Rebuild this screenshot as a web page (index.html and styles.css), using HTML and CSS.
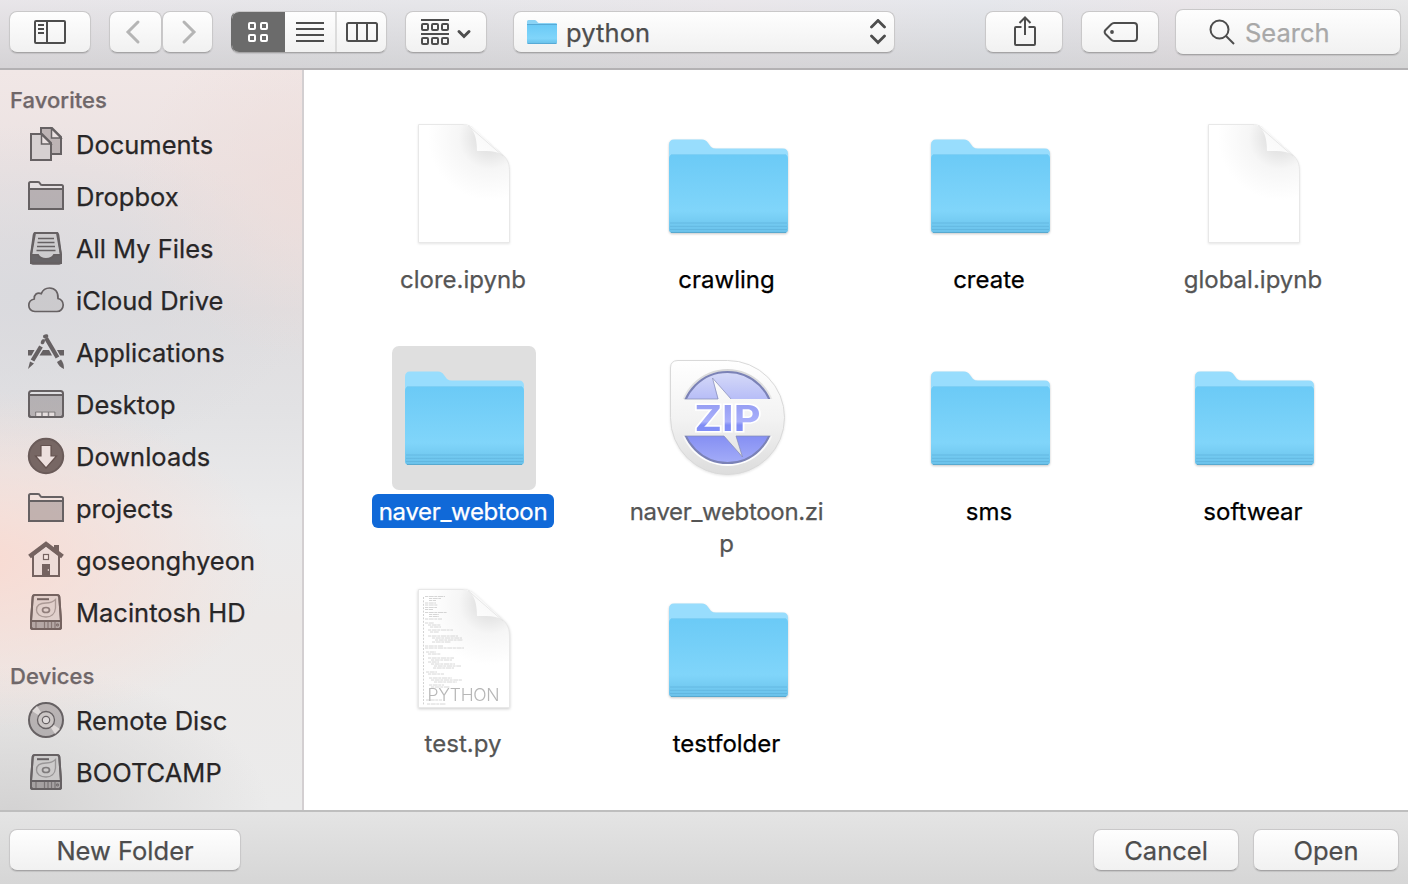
FILE: index.html
```html
<!DOCTYPE html>
<html lang="en">
<head>
<meta charset="utf-8">
<title>Open</title>
<link rel="stylesheet" href="styles.css">
</head>
<body>
<svg class="defs" width="0" height="0" aria-hidden="true">
  <defs>
    <linearGradient id="folderFront" x1="0" y1="0" x2="0" y2="1">
      <stop offset="0" stop-color="#6bcaf6"/><stop offset=".72" stop-color="#80d5fa"/><stop offset=".86" stop-color="#74cbf2"/><stop offset="1" stop-color="#6ac1ea"/>
    </linearGradient>
    <linearGradient id="curl" x1="0" y1="1" x2=".6" y2=".4">
      <stop offset="0" stop-color="#fff"/><stop offset="1" stop-color="#f9f9f9"/>
    </linearGradient>
    <radialGradient id="pageShade" gradientUnits="userSpaceOnUse" cx="98" cy="24" r="62">
      <stop offset="0" stop-color="#dcdcdc"/><stop offset=".25" stop-color="#e6e6e6"/><stop offset=".5" stop-color="#f6f6f6"/><stop offset="1" stop-color="#fff"/>
    </radialGradient>
    <linearGradient id="zipPlate" gradientUnits="userSpaceOnUse" x1="0" y1="14" x2="0" y2="129">
      <stop offset="0" stop-color="#fff"/><stop offset=".5" stop-color="#f3f3f3"/><stop offset="1" stop-color="#dcdcdc"/>
    </linearGradient>
    <linearGradient id="zipRing" x1="0" y1="0" x2="0" y2="1">
      <stop offset="0" stop-color="#d8d8d8"/><stop offset=".5" stop-color="#f0f0f0"/><stop offset="1" stop-color="#fff"/>
    </linearGradient>
    <linearGradient id="zipBlue" x1="0" y1="0" x2="0" y2="1">
      <stop offset="0" stop-color="#d6daf8"/><stop offset=".28" stop-color="#b9bff7"/><stop offset=".7" stop-color="#858ff3"/><stop offset="1" stop-color="#a3acf8"/>
    </linearGradient>
    <linearGradient id="zipText" x1="0" y1="0" x2="0" y2="1">
      <stop offset="0" stop-color="#8e96f0"/><stop offset=".6" stop-color="#a9b0fb"/><stop offset=".68" stop-color="#7f8cf5"/><stop offset="1" stop-color="#8794fa"/>
    </linearGradient>
    <symbol id="folder" viewBox="0 0 144 144">
      <path d="M13 31Q13 25.500 18 25.500H46Q50 25.500 52 29L55 33Q57 34.500 60 34.500H127Q132 34.500 132 40V114Q132 119 128 119H17Q13 119 13 114Z" fill="#98ddfd"/>
      <path d="M13 45Q13 40 18 40H127Q132 40 132 45V115Q132 119 128 119H17Q13 119 13 115Z" fill="url(#folderFront)"/>
      <path d="M14 109H131M14 112.300H131M14 115.500H131" stroke="#5fb3dc" stroke-width="1" opacity=".75"/>
      <path d="M15 118.500H130" stroke="#58a9cf" stroke-width="1.200"/>
      <path d="M15 40.500H130" stroke="#7dcff5" stroke-width="1"/>
    </symbol>
    <symbol id="page" viewBox="0 0 144 144">
      <path d="M26.500 10.500H70C78 10.500 81 14 85 18L111 41C116 46 117.500 50 117.500 58V128.500H26.500Z" fill="url(#pageShade)" stroke="#e8e8e8"/>
      <path d="M71 10.700C80 11 85 20 85 37C101 36.500 109 38 113 43L85 17C80 12.500 77 10.700 71 10.700Z" fill="url(#curl)"/>
      <path d="M76 11.500L111 42" stroke="#e2e2e2" fill="none" stroke-width=".8"/>
    </symbol>
    <symbol id="s-folder" viewBox="0 0 40 40">
      <path d="M3 12H37V32H3Z" class="tint"/>
      <path d="M3 31V6.500Q3 5 4.500 5H12Q13.500 5 14 6.500T16 8H35.500Q37 8 37 9.500V31Q37 32 36 32H4Q3 32 3 31ZM3 12H37"/>
    </symbol>
    <symbol id="s-drive" viewBox="0 0 40 40">
      <path d="M9 2H31Q33 2 33.300 4L35 28V34Q35 36 33 36H7Q5 36 5 34V28L6.700 4Q7 2 9 2Z" class="tint-light"/>
      <path d="M5 28H35V34Q35 36 33 36H7Q5 36 5 34Z" class="tint"/>
      <path d="M11 6.200H23"/>
      <path d="M29.500 6.500V15C29 21 25 24 20 24C14 24 10.500 21 10.500 17C10.500 12.500 14 10 20 10C25 10 27 9 29.500 6.500Z" stroke-width="1.300" opacity=".5"/>
      <ellipse cx="20" cy="17" rx="3.500" ry="2.500" stroke-width="1.700" opacity=".75"/>
      <path d="M5 28H35" stroke-width="1.500"/>
      <path d="M10 28V35M18.500 29V35M22 29V35M25.500 29V35M29 29V35" stroke-width="1.200" opacity=".7"/>
      <circle cx="31.500" cy="32" r=".4"/>
      <path d="M9 2H31Q33 2 33.300 4L35 28V34Q35 36 33 36H7Q5 36 5 34V28L6.700 4Q7 2 9 2Z"/>
    </symbol>
  </defs>
</svg>

<div class="dialog">
  <header class="toolbar">
    <button class="btn btn-sidebar" aria-label="Sidebar">
      <svg width="34" height="26" viewBox="0 0 34 26" class="glyph"><rect x="2" y="2" width="30" height="22" rx="1"/><path d="M14 2V24M5 6H11M5 10H11M5 14H11"/></svg>
    </button>
    <div class="nav">
      <button class="btn btn-back" aria-label="Back"><svg width="16" height="26" viewBox="0 0 16 26" class="chev"><path d="M13 3L3 13L13 23"/></svg></button>
      <button class="btn btn-fwd" aria-label="Forward"><svg width="16" height="26" viewBox="0 0 16 26" class="chev"><path d="M3 3L13 13L3 23"/></svg></button>
    </div>
    <div class="btn segments">
      <span class="seg seg-on"><svg width="22" height="22" viewBox="0 0 22 22" class="glyph white"><rect x="2" y="2" width="6" height="6" rx="1"/><rect x="14" y="2" width="6" height="6" rx="1"/><rect x="2" y="14" width="6" height="6" rx="1"/><rect x="14" y="14" width="6" height="6" rx="1"/></svg></span>
      <span class="seg seg-mid"><svg width="28" height="22" viewBox="0 0 28 22" class="glyph"><path d="M0 2H28M0 8H28M0 14H28M0 20H28"/></svg></span>
      <span class="seg seg-end"><svg width="32" height="22" viewBox="0 0 32 22" class="glyph"><rect x="1" y="2" width="30" height="18" rx="1.500"/><path d="M11 2V20M21 2V20"/></svg></span>
    </div>
    <button class="btn btn-group" aria-label="Arrange">
      <svg width="52" height="28" viewBox="0 0 52 28" class="glyph"><path d="M1 2H29M1 16H29"/><rect x="2" y="6" width="6" height="6" rx="1"/><rect x="12" y="6" width="6" height="6" rx="1"/><rect x="22" y="6" width="6" height="6" rx="1"/><rect x="2" y="20" width="6" height="6" rx="1"/><rect x="12" y="20" width="6" height="6" rx="1"/><rect x="22" y="20" width="6" height="6" rx="1"/><path d="M39 13.500L44 18.500L49 13.500" stroke-width="3" stroke-linecap="round"/></svg>
    </button>
    <div class="btn path">
      <svg class="path-folder" width="32" height="26" viewBox="0 0 32 26"><path d="M1 2.500Q1 1 2.500 1H9Q10 1 11 2.500T13 4H29.500Q31 4 31 5V23Q31 24.500 29.500 24.500H2.500Q1 24.500 1 23Z" fill="#8bd3f5"/><path d="M1 6H31V23Q31 24.500 29.500 24.500H2.500Q1 24.500 1 23Z" fill="url(#folderFront)"/><path d="M1 5.500H31M1.500 24.500H30.500" stroke="#57aad6" fill="none"/></svg>
      <span class="path-name">python</span>
      <svg width="18" height="26" viewBox="0 0 18 26" class="glyph updown"><path d="M2.500 8L9 1.500L15.500 8M2.500 17L9 23.500L15.500 17" stroke-linecap="round"/></svg>
    </div>
    <button class="btn btn-share" aria-label="Share">
      <svg width="24" height="32" viewBox="0 0 24 32" class="glyph"><path d="M8.500 12H3Q2 12 2 13V29Q2 30 3 30H21Q22 30 22 29V13Q22 12 21 12H15.500M12 20V3M6.500 8L12 2.500L17.500 8"/></svg>
    </button>
    <button class="btn btn-tag" aria-label="Tags">
      <svg width="36" height="22" viewBox="0 0 36 22" class="glyph"><path d="M11 2H31Q34 2 34 5V17Q34 20 31 20H11Q9.500 20 8 18.500L2.500 13Q.8 11 2.500 9L8 3.500Q9.500 2 11 2Z"/><circle cx="9" cy="11" r="1.900" fill="#4d4d4d" stroke="none"/></svg>
    </button>
    <div class="btn search">
      <svg width="26" height="26" viewBox="0 0 26 26" class="glyph"><circle cx="10.500" cy="10.500" r="9"/><path d="M17 17L25 25"/></svg>
      <span>Search</span>
    </div>
  </header>

  <div class="body">
    <nav class="sidebar">
      <h2>Favorites</h2>
      <ul>
        <li><svg class="ico" viewBox="0 0 40 40"><path d="M15 3H26L35 12V29H15Z" class="tint"/><path d="M25.500 3.500V13H35Z" fill="#e9e0e0" stroke-width="1.500"/><path d="M5 9H16L25 18V35H5Z" fill="#d6d0d1"/><path d="M15.500 9.500V19H25Z" fill="#e9e0e0" stroke-width="1.500"/></svg><span>Documents</span></li>
        <li><svg class="ico"><use href="#s-folder"/></svg><span>Dropbox</span></li>
        <li><svg class="ico" viewBox="0 0 40 40"><path d="M9 4H31L35 26V34H5V26Z" class="tint-light"/><path d="M5 26H12Q14 30 20 30T28 26H35V32Q35 34.500 33 34.500H7Q5 34.500 5 32Z" fill="#676467"/><path d="M9 4H31Q32 4 32.300 6L35 26V32Q35 34.500 33 34.500H7Q5 34.500 5 32V26L7.700 6Q8 4 9 4Z"/><path d="M12 9.500H28M11.500 13.500H28.500M11 17.500H29M10.500 21.500H29.500" stroke-width="1.700"/></svg><span>All My Files</span></li>
        <li><svg class="ico" viewBox="0 0 40 40"><path d="M9 30.500C5 30.500 2.800 27.500 2.800 24.500C2.800 21 5 18.600 8.200 18C8 13.500 11 11 15.300 12.600C17 8.500 20 7 23.500 7C29 7 32.500 11 32 17.500C35.500 18.500 37.200 21 37.200 24C37.200 27.500 34.500 30.500 31 30.500Z" class="tint-light" stroke-width="1.700"/></svg><span>iCloud Drive</span></li>
        <li><svg class="ico" viewBox="0 0 40 40"><path d="M2 17H8.500L5.500 22.500H2ZM17 17H23L26 22.500H13.500ZM31 17H38V22.500H34Z" class="solid"/><path d="M20 5L31.500 24.500M15 13.500L6.500 27.500" stroke-width="4.200"/><path d="M18.800 3.500L20.500 3M16.500 9.500L17.200 8" stroke-width="3.600" stroke-linecap="round"/><path d="M4 28.500L8 30.500L2 36ZM31 29L35 26.500Q38 30 38 36Q33 34 31 29Z" class="solid"/></svg><span>Applications</span></li>
        <li><svg class="ico" viewBox="0 0 40 40"><path d="M3 10H37V30Q37 32 35 32H5Q3 32 3 30Z" class="tint"/><path d="M10.500 27.500H15V31H10.500ZM17 27.500H21.500V31H17ZM23.500 27.500H28V31H23.500Z" fill="#e5dede" stroke="none"/><path d="M9.500 31V27H29V31M16 27V31M22.500 27V31" stroke-width="1" opacity=".6"/><rect x="3" y="6" width="34" height="26" rx="2.500"/><path d="M3 10H37"/></svg><span>Desktop</span></li>
        <li><svg class="ico" viewBox="0 0 40 40"><circle cx="20" cy="19" r="17.200" fill="#776764" stroke="#6a5b59"/><path d="M15 8.500H25V19H30.500L20 31L9.500 19H15Z" fill="#ede0de" stroke="#64524f" stroke-width="1.200"/></svg><span>Downloads</span></li>
        <li><svg class="ico"><use href="#s-folder"/></svg><span>projects</span></li>
        <li><svg class="ico home" viewBox="0 0 40 40"><path d="M28 4H33V12L28 8Z" class="solid"/><path d="M7 14L20 4L33 14V35H7Z" fill="#eddcd8"/><path d="M3.500 15.500L20 3L36.500 15.500" stroke-width="4.500"/><rect x="17.500" y="13.500" width="5" height="5" stroke-width="1.200" fill="#f5e6e2"/><path d="M16 23H24V35H16Z" class="solid"/><path d="M22.300 28V30" stroke="#e8d8d4" stroke-width="1"/></svg><span>goseonghyeon</span></li>
        <li><svg class="ico home"><use href="#s-drive"/></svg><span>Macintosh HD</span></li>
      </ul>
      <h2 class="second">Devices</h2>
      <ul>
        <li><svg class="ico" viewBox="0 0 40 40"><circle cx="20" cy="19" r="17" class="tint"/><path d="M20 19L6 10L11 5ZM20 19L34 28L29 33Z" fill="#ded9d8" stroke="none"/><circle cx="20" cy="19" r="8.500" fill="#cbc6c5" stroke-width="1.300"/><circle cx="20" cy="19" r="3.700" fill="#dedada" stroke-width="1.200"/></svg><span>Remote Disc</span></li>
        <li><svg class="ico"><use href="#s-drive"/></svg><span>BOOTCAMP</span></li>
      </ul>
    </nav>

    <main class="files">
      <div class="file dim"><svg class="thumb faint"><use href="#page"/></svg><span class="name">clore.ipynb</span></div>
      <div class="file"><svg class="thumb"><use href="#folder"/></svg><span class="name">crawling</span></div>
      <div class="file"><svg class="thumb"><use href="#folder"/></svg><span class="name">create</span></div>
      <div class="file dim"><svg class="thumb faint"><use href="#page"/></svg><span class="name">global.ipynb</span></div>
      <div class="file selected"><svg class="thumb"><use href="#folder"/></svg><span class="name long">naver_webtoon</span></div>
      <div class="file dim">
        <svg class="thumb faint" viewBox="0 0 144 144">
          <path d="M14.500 22Q14.500 14.500 22 14.500H71.500A57 57 0 1 1 14.500 71.500Z" fill="url(#zipPlate)" stroke="#d9d9d9"/>
          <circle cx="71.500" cy="71.500" r="48.500" fill="url(#zipRing)"/>
          <circle cx="71.500" cy="71.500" r="45.500" fill="url(#zipBlue)" stroke="#7b82b6" stroke-width="2"/>
          <path d="M20 53H62.500L56.500 32L75 53H123V90H80L86.500 111L68 90H20Z" fill="url(#zipPlate)"/>
          <path d="M28.500 53H62L56.500 32L75 53M114.500 90H80L86.500 111L68 90H28.500" fill="none" stroke="#858bb5" stroke-width="1" opacity=".7"/>
          <text x="38.500" y="84.500" textLength="66" lengthAdjust="spacingAndGlyphs" class="zip-word">ZIP</text>
        </svg>
        <span class="name long">naver_webtoon.zi<br>p</span></div>
      <div class="file"><svg class="thumb"><use href="#folder"/></svg><span class="name">sms</span></div>
      <div class="file"><svg class="thumb"><use href="#folder"/></svg><span class="name">softwear</span></div>
      <div class="file dim">
        <svg class="thumb faint code-page" viewBox="0 -1 144 144">
          <use href="#page" width="144" height="144"/>
          <path d="M31.500 18V126" stroke="#d2d2d2" stroke-dasharray="2 1.400"/>
          <g stroke="#cccccc" stroke-width=".8" stroke-dasharray="3 .7 5 .6" fill="none">
            <path d="M33 17.500H53M37 19.500H49M37 21.500H44M33 24H44M33 26H46M33 28.500H45M33 30.500H41M33 33.500H55M37 35.500H47M37 37.500H47M33 40H50M33 44H42M36 46H49M38 48H49M36 51H61M38 53H47M36 57H66M40 59H70M43 61H71M40 63H59M33 67H51M33 69H72"/>
            <path d="M34 73H44M36 75H49M36 79H62M39 81H60M36 83H47M39 85H63M42 87H69M41 89H62M34 93H45M36 95H52M37 99H60M39 101H70M42 103H65M37 106H52M39 108H58M34 121H50M35 125H54"/>
          </g>
          <text x="35.500" y="121.500" textLength="72" class="py-word">PYTHON</text>
        </svg>
        <span class="name">test.py</span></div>
      <div class="file"><svg class="thumb"><use href="#folder"/></svg><span class="name">testfolder</span></div>
    </main>
  </div>

  <footer class="footer">
    <button class="btn new-folder">New Folder</button>
    <div class="actions">
      <button class="btn action">Cancel</button>
      <button class="btn action">Open</button>
    </div>
  </footer>
</div>
</body>
</html>
```
FILE: styles.css
```css
* { box-sizing: border-box; }
body {
  margin: 0;
  font-family: Inter, "Liberation Sans", sans-serif;
  font-size: 25.5px;
  color: #222;
  -webkit-text-stroke: .25px currentColor;
}
.defs { display: block; position: absolute; }
.dialog { width: 1408px; height: 884px; display: flex; flex-direction: column; overflow: hidden; }

/* Controls */
.btn {
  height: 41px;
  padding: 0;
  display: flex;
  align-items: center;
  justify-content: center;
  border: 1px solid #c9c8c9;
  border-bottom-color: #a5a4a5;
  border-radius: 8px;
  background: linear-gradient(#fefefe, #f1f1f1);
  box-shadow: 0 1px 1px rgba(0, 0, 0, .1);
  font: inherit;
  color: #4d4d4d;
}
.glyph { fill: none; stroke: #4d4d4d; stroke-width: 2; }
.glyph.white { stroke: #fff; }
.chev { fill: none; stroke: #b5b5b5; stroke-width: 3; stroke-linecap: round; }

/* Toolbar */
.toolbar {
  height: 70px;
  flex: none;
  display: flex;
  align-items: flex-start;
  padding: 11px 7px 0 9px;
  border-bottom: 2px solid #b3b1b3;
  background: linear-gradient(rgba(255,255,255,.1), rgba(180,180,180,.34)), linear-gradient(90deg, #e6e3e7, #e4e4e8 30%, #e8e5e9 52%, #e3e5ea 70%, #e8e4e8 84%, #e6e6e7);
}
.toolbar .btn { height: 42px; }
.btn-sidebar { width: 82px; }
.nav { display: flex; gap: 0; margin-left: 18px; }
.btn-back { width: 53px; padding-right: 6px; }
.btn-fwd { width: 51px; padding-left: 3px; }
.segments { width: 156px; margin-left: 18px; overflow: hidden; justify-content: flex-start; border-left-color: #6b6b6b; }
.seg { height: 42px; display: flex; align-items: center; justify-content: center; }
.seg-on { width: 54px; background: #6b6b6b; margin: -1px 0 -1px -1px; }
.seg-mid { width: 51px; }
.seg-end { width: 51px; border-left: 2px solid #dcdcdc; }
.btn-group { width: 82px; margin-left: 18px; }
.path { width: 382px; margin-left: 26px; padding: 0 7px 0 12px; justify-content: flex-start; }
.path-name { margin: 1px 0 0 8px; letter-spacing: .1px; }
.updown { margin-left: auto; stroke-width: 2.8; }
.btn-share { width: 78px; margin-left: 90px; padding: 0 0 2px 1px; }
.btn-tag { width: 78px; margin-left: 18px; padding-left: 2px; }
.toolbar .search { width: 226px; height: 46px; margin: -2px 0 0 16px; justify-content: flex-start; padding-left: 33px; gap: 10px; color: #a8a8a8; }

/* Body */
.body { flex: 1; display: flex; min-height: 0; }
.sidebar {
  width: 304px;
  flex: none;
  padding: 11px 0 0 10px;
  border-right: 2px solid #d3cfd1;
  background:
    radial-gradient(ellipse 290px 170px at -20px 490px, rgba(249,218,209,.95), rgba(249,218,209,0)),
    radial-gradient(ellipse 190px 170px at 320px 120px, rgba(238,221,218,.8), rgba(238,221,218,0)),
    radial-gradient(ellipse 260px 150px at 10px 745px, #d3d2d2, rgba(211,210,210,0)),
    radial-gradient(ellipse 290px 170px at 20px 225px, #dadade, rgba(218,218,222,0)),
    linear-gradient(#f1e7e6 0, #ebe2e2 100px, #dfdddf 240px, #e2e2e4 340px, #ebebec 450px, #ece9e8 550px, #ebebeb 740px);
}
.sidebar h2 { margin: 0; height: 38px; line-height: 38px; font-size: 22px; font-weight: 500; letter-spacing: .05px; color: #6f6769; }
.sidebar .second { margin-top: 18px; }
.sidebar ul { margin: 0; padding: 0 0 0 16px; list-style: none; }
.sidebar li { height: 52px; display: flex; align-items: center; gap: 10px; color: #282627; }
.sidebar li span { padding-bottom: 2px; }
.ico { width: 40px; height: 40px; fill: none; stroke: #666163; stroke-width: 2; flex: none; }
.ico.home { stroke: #756360; }
.tint { fill: rgba(90, 82, 84, .32); }
.tint-light { fill: rgba(110, 105, 108, .14); }
.solid { fill: #666163; stroke: none; }
.home .solid { fill: #756360; }

/* File grid */
.files {
  flex: 1;
  display: grid;
  grid-template-columns: 263px 264px 261px 267px;
  grid-auto-rows: 232px;
  align-content: start;
  padding: 44px 0 0 28.500px;
  background: #fff;
}
.file { display: flex; flex-direction: column; align-items: center; color: #000; }
.thumb { width: 144px; height: 144px; flex: none; border-radius: 7px; filter: drop-shadow(0 1.500px 1px rgba(0, 0, 0, .22)); }
.thumb.faint { filter: drop-shadow(0 1px 1px rgba(0, 0, 0, .1)); }
.thumb.code-page { filter: drop-shadow(0 1.500px 1.500px rgba(0, 0, 0, .2)); }
.name { margin: 4px 2px 0 0; padding: 2px 7px 0; border-radius: 6px; font-size: 24px; line-height: 32px; text-align: center; }
.name.long { letter-spacing: -.33px; }
.dim { color: #555; }
.selected .thumb { background: #dfdfdf; filter: none; }
.selected .name { color: #fff; background: #1069d8; }
.zip-word { font: 700 35px Inter, sans-serif; fill: url(#zipText); stroke: #fff; stroke-width: 3; paint-order: stroke; }
.py-word { font: 300 17.500px Inter, sans-serif; fill: #b7b7b7; -webkit-text-stroke: 0; }

/* Footer */
.footer {
  height: 74px;
  flex: none;
  display: flex;
  justify-content: space-between;
  padding: 17px 9px 0 9px;
  border-top: 2px solid #bebebe;
  background: linear-gradient(#e4e4e4, #d6d6d6);
}
.new-folder { width: 232px; }
.footer .btn { height: 42px; }
.actions { display: flex; gap: 14px; }
.action { width: 146px; }
```
